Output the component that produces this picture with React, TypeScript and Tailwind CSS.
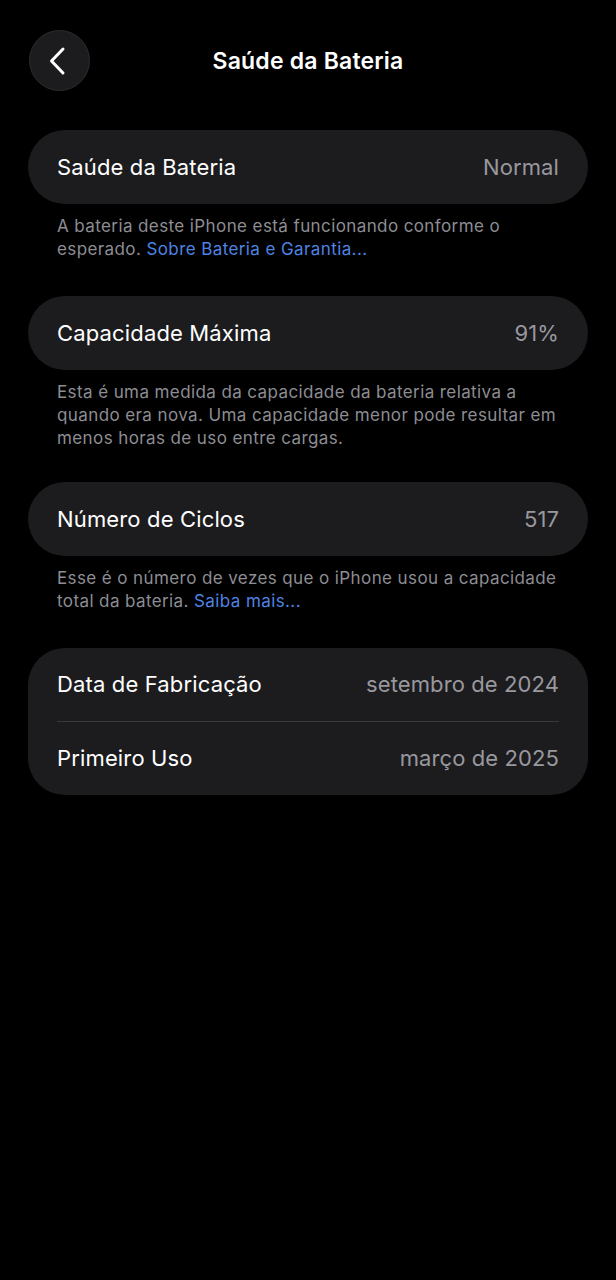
import React from "react";

const font = { fontFamily: "Inter, 'Noto Sans', 'Liberation Sans', sans-serif" };

function Row({ label, value, h = "h-[74px]" }: { label: string; value: string; h?: string }) {
  return (
    <div className={`flex ${h} items-center justify-between px-[29px]`}>
      <span className="text-[22px] text-white tracking-[0.15px]">{label}</span>
      <span className="text-[22px] text-[#98989e] tracking-[0.1px]">{value}</span>
    </div>
  );
}

function Footer({ children }: { children: React.ReactNode }) {
  return (
    <p className="mt-[11px] px-[29px] text-[17px] leading-[23px] text-[#8d8d93] tracking-[0.4px]">
      {children}
    </p>
  );
}

export default function App() {
  return (
    <div className="min-h-[1280px] w-full bg-black" style={font}>
      <div className="relative flex h-[122px] items-center justify-center">
        <button className="absolute left-[29px] top-[30px] flex h-[61px] w-[61px] items-center justify-center rounded-full border border-[#2c2c2e] bg-[#1c1c1e]">
          <svg width="30" height="30" viewBox="0 0 30 30" fill="none">
            <path d="M18 3 L6.5 15 L18 27" stroke="white" strokeWidth="3" strokeLinecap="round" strokeLinejoin="round" />
          </svg>
        </button>
        <h1 className="text-[23px] font-semibold text-white tracking-[0.2px]">Saúde da Bateria</h1>
      </div>

      <div className="px-[28px] pt-[8px]">
        <div className="rounded-[37px] bg-[#1c1c1e]">
          <Row label="Saúde da Bateria" value="Normal" />
        </div>
        <Footer>
          A bateria deste iPhone está funcionando conforme o esperado.{" "}
          <span className="text-[#4f83e3]">Sobre Bateria e Garantia...</span>
        </Footer>

        <div className="mt-[35px] rounded-[37px] bg-[#1c1c1e]">
          <Row label="Capacidade Máxima" value="91%" />
        </div>
        <Footer>
          Esta é uma medida da capacidade da bateria relativa a quando era nova. Uma capacidade menor pode resultar em menos horas de uso entre cargas.
        </Footer>

        <div className="mt-[32px] rounded-[37px] bg-[#1c1c1e]">
          <Row label="Número de Ciclos" value="517" />
        </div>
        <Footer>
          Esse é o número de vezes que o iPhone usou a capacidade total da bateria.{" "}
          <span className="text-[#4f83e3]">Saiba mais...</span>
        </Footer>

        <div className="mt-[35px] rounded-[37px] bg-[#1c1c1e]">
          <Row label="Data de Fabricação" value="setembro de 2024" h="h-[73px]" />
          <div className="mx-[29px] h-px bg-[#3a3a3c]" />
          <Row label="Primeiro Uso" value="março de 2025" h="h-[73px]" />
        </div>
      </div>
    </div>
  );
}
